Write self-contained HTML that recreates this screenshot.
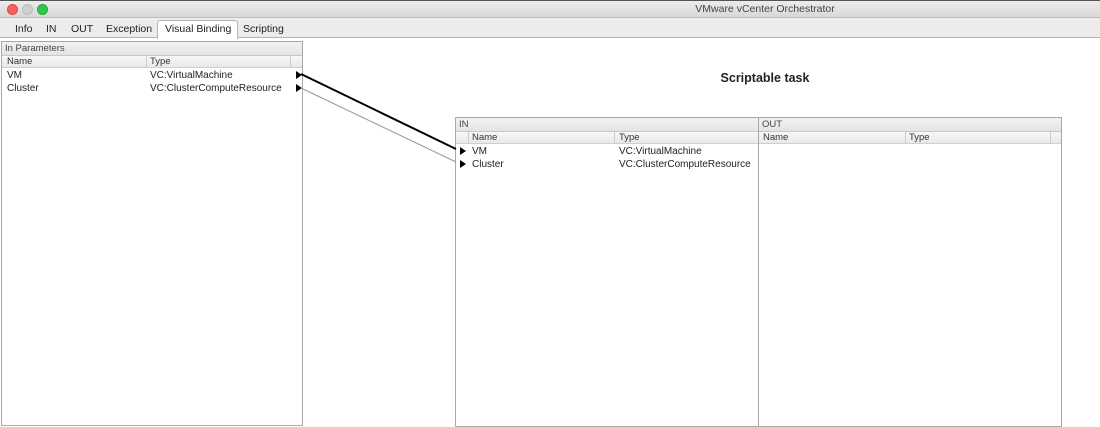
<!DOCTYPE html><html><head><style>
*{margin:0;padding:0;box-sizing:border-box}
body{width:1100px;height:421px;background:#fff;font-family:"Liberation Sans",sans-serif;font-size:10px;color:#222;position:relative;overflow:hidden}
.abs{position:absolute}
.tb{left:0;top:0;width:1100px;height:18px;background:linear-gradient(#ececec,#d8d8d8);border-bottom:1px solid #bdbdbd;border-top:1px solid #555}
.dot{top:4px;width:11px;height:11px;border-radius:50%}
.tabs{left:0;top:18px;width:1100px;height:20px;background:#ececec;border-bottom:1px solid #b5b5b5}
.tab{top:23px;font-size:10.5px;color:#222}
.grp{background:linear-gradient(#f2f2f2,#e4e4e4);border-bottom:1px solid #c8c8c8;height:14px;padding-left:3px;line-height:13px;font-size:9.5px;color:#444}
.hd{background:linear-gradient(#f8f8f8,#e8e8e8);border-bottom:1px solid #d0d0d0;height:12px;line-height:11px;font-size:9.5px;color:#333}
.panel{border:1px solid #a8a8a8;background:#fff}
.row{font-size:10px;height:13px;line-height:13px}
.tri{width:0;height:0;border-top:4px solid transparent;border-bottom:4px solid transparent;border-left:6px solid #000}
.vs{border-left:1px solid #ccc;top:0;height:12px}
</style></head><body>
<div class="abs tb"></div>
<div class="abs dot" style="left:7px;background:#fc605c;border:1px solid #de4a44"></div>
<div class="abs dot" style="left:22px;background:#d0d0d0;border:1px solid #bbb"></div>
<div class="abs dot" style="left:37px;background:#34c84a;border:1px solid #26a63a"></div>
<div class="abs" style="left:0;width:1100px;top:3px;text-align:center;padding-left:430px;font-size:10.5px;color:#444">VMware vCenter Orchestrator</div>
<div class="abs tabs"></div>
<div class="abs" style="left:157px;top:20px;width:81px;height:19px;background:#fff;border:1px solid #b5b5b5;border-bottom:none;border-radius:3px 3px 0 0"></div>
<div class="abs tab" style="left:15px">Info</div>
<div class="abs tab" style="left:46px">IN</div>
<div class="abs tab" style="left:71px">OUT</div>
<div class="abs tab" style="left:106px">Exception</div>
<div class="abs tab" style="left:165px">Visual Binding</div>
<div class="abs tab" style="left:243px">Scripting</div>

<div class="abs panel" style="left:1px;top:41px;width:302px;height:385px">
<div class="grp">In Parameters</div>
<div class="hd" style="position:relative"><span style="position:absolute;left:5px">Name</span><span style="position:absolute;left:148px">Type</span><div class="abs vs" style="left:144px"></div><div class="abs vs" style="left:288px"></div></div>
<div class="row" style="position:relative;margin-top:1px"><span class="abs" style="left:5px">VM</span><span class="abs" style="left:148px">VC:VirtualMachine</span><div class="abs tri" style="left:294px;top:2px"></div></div>
<div class="row" style="position:relative"><span class="abs" style="left:5px">Cluster</span><span class="abs" style="left:148px">VC:ClusterComputeResource</span><div class="abs tri" style="left:294px;top:2px"></div></div>
</div>

<div class="abs" style="left:0;top:71px;width:1100px;text-align:center;padding-left:430px;font-size:12.5px;font-weight:bold;color:#222">Scriptable task</div>

<div class="abs panel" style="left:455px;top:117px;width:304px;height:310px">
<div class="grp">IN</div>
<div class="hd" style="position:relative"><span style="position:absolute;left:16px">Name</span><span style="position:absolute;left:163px">Type</span><div class="abs vs" style="left:12px"></div><div class="abs vs" style="left:158px"></div></div>
<div class="row" style="position:relative;margin-top:1px"><div class="abs tri" style="left:4px;top:2px"></div><span class="abs" style="left:16px">VM</span><span class="abs" style="left:163px">VC:VirtualMachine</span></div>
<div class="row" style="position:relative"><div class="abs tri" style="left:4px;top:2px"></div><span class="abs" style="left:16px">Cluster</span><span class="abs" style="left:163px">VC:ClusterComputeResource</span></div>
</div>
<div class="abs panel" style="left:758px;top:117px;width:304px;height:310px">
<div class="grp">OUT</div>
<div class="hd" style="position:relative"><span style="position:absolute;left:4px">Name</span><span style="position:absolute;left:150px">Type</span><div class="abs vs" style="left:146px"></div><div class="abs vs" style="left:291px"></div></div>
</div>

<svg class="abs" style="left:0;top:0" width="1100" height="421">
<line x1="301" y1="74" x2="456" y2="149" stroke="#000" stroke-width="2"/>
<line x1="301" y1="88" x2="456" y2="162" stroke="#999" stroke-width="1"/>
</svg>
</body></html>
